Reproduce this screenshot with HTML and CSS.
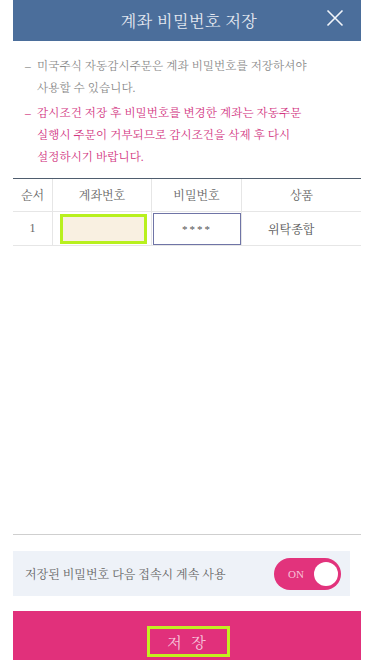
FILE: index.html
```html
<!DOCTYPE html>
<html lang="ko">
<head>
<meta charset="utf-8">
<link rel="stylesheet" href="styles.css">
</head>
<body>
<div class="page">
  <div class="header">
    <span class="title">계좌 비밀번호 저장</span>
    <svg class="close" width="18" height="18" viewBox="0 0 18 18"><path d="M1.5 1.5 L16.5 16.5 M16.5 1.5 L1.5 16.5" stroke="#f2f5fa" stroke-width="1.6" fill="none"/></svg>
  </div>
  <div class="notes">
    <div class="note gray"><span class="dash">–</span><span class="txt">미국주식 자동감시주문은 계좌 비밀번호를 저장하셔야 사용할 수 있습니다.</span></div>
    <div class="note pink"><span class="dash">–</span><span class="txt">감시조건 저장 후 비밀번호를 변경한 계좌는 자동주문 실행시 주문이 거부되므로 감시조건을 삭제 후 다시 설정하시기 바랍니다.</span></div>
  </div>
  <div class="table">
    <div class="row head">
      <div class="cell c1">순서</div>
      <div class="cell c2">계좌번호</div>
      <div class="cell c3">비밀번호</div>
      <div class="cell c4">상품</div>
    </div>
    <div class="row body">
      <div class="cell c1">1</div>
      <div class="cell c2"><div class="acct"></div></div>
      <div class="cell c3"><div class="pw">****</div></div>
      <div class="cell c4">위탁종합</div>
    </div>
  </div>
  <div class="spacer"></div>
  <div class="divider"></div>
  <div class="toggle-row">
    <span>저장된 비밀번호 다음 접속시 계속 사용</span>
    <div class="toggle"><span class="on">ON</span><span class="knob"></span></div>
  </div>
  <div class="save"><span class="save-box">저 장</span></div>
</div>
</body>
</html>
```
FILE: styles.css
```css
html, body { margin: 0; padding: 0; background: #fff; }
body { font-family: "Liberation Serif", "Noto Serif CJK KR", "Noto Sans CJK KR", serif; }
.page {
  width: 348px;
  margin-left: 13px;
  height: 664px;
  display: flex;
  flex-direction: column;
}
.header {
  height: 41px;
  background: #4b6e9b;
  display: flex;
  align-items: center;
  justify-content: center;
  position: relative;
  flex: none;
}
.title { color: #e4e9f1; font-size: 16px; letter-spacing: 0.5px; margin-left: 4px; }
.close { position: absolute; left: 313px; top: 9px; }
.notes { padding: 14px 0 0 12px; }
.note { display: flex; font-size: 11.5px; line-height: 22px; margin-bottom: 3px; }
.dash { width: 12px; flex: none; }
.gray { color: #8a8a8a; }
.pink { color: #d2357f; }
.txt { width: 290px; word-break: keep-all; letter-spacing: 0.1px; }
.table { margin-top: 7px; border-top: 1px solid #4f5d6e; }
.row { display: flex; }
.row.head { height: 32px; border-bottom: 1px solid #e6e6e6; }
.row.body { height: 33px; border-bottom: 1px solid #e6e6e6; }
.cell {
  display: flex; align-items: center; justify-content: center;
  font-size: 12px; color: #666;
  border-right: 1px solid #e6e6e6;
  box-sizing: border-box;
}
.cell.c4 { border-right: none; }
.c1 { width: 40px; }
.c2 { width: 99px; }
.c3 { width: 90px; }
.c4 { width: 119px; }
.row.body .c4 { justify-content: flex-start; padding-left: 26px; color: #555; }
.acct {
  width: 87px; height: 30px; box-sizing: border-box;
  border: 3px solid #b8f01e; background: #f9f0e1; margin-left: 3px;
}
.pw {
  width: 89px; height: 32px; box-sizing: border-box;
  border: 1px solid #6f74a6; background: #fff;
  display: flex; align-items: center; justify-content: center;
  font-size: 11px; letter-spacing: 2px; color: #555; margin-left: 1px;
}
.spacer { flex: 1; }
.divider { height: 1px; background: #cfcfcf; flex: none; }
.toggle-row {
  margin-top: 16px; width: 337px; height: 45px; background: #eef2f8;
  display: flex; align-items: center; justify-content: space-between;
  box-sizing: border-box; padding: 0 9px 0 12px;
  font-size: 12px; color: #666; flex: none;
}
.toggle {
  width: 67px; height: 32px; border-radius: 16px; background: #e2337c;
  display: flex; align-items: center; justify-content: space-between;
  box-sizing: border-box; padding: 0 3px 0 14px;
}
.on { color: #f7c2d8; font-size: 11px; }
.knob { width: 24px; height: 24px; border-radius: 50%; background: #fff; }
.save {
  margin-top: 15px; height: 49px; background: #e1307b;
  display: flex; align-items: center; justify-content: center; flex: none;
  margin-bottom: 4px;
}
.save-box {
  width: 83px; height: 31px; box-sizing: border-box; margin-left: 2px;
  border: 3px solid #c2f020; color: #f6c6dc; font-size: 15px;
  display: flex; align-items: center; justify-content: center; letter-spacing: 3px;
  margin-top: 12px;
}
```
